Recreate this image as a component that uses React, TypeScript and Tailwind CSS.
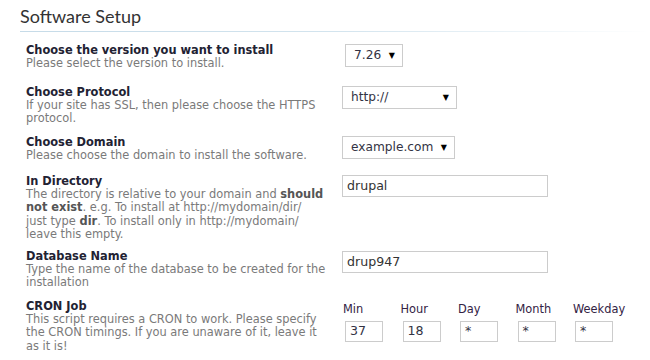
import { ReactNode } from "react";

const vd = { fontFamily: '"DejaVu Sans", Verdana, sans-serif' };

function Select({ value, width, className = "" }: { value: string; width: string; className?: string }) {
  return (
    <div
      className={`flex h-[23px] items-center justify-between border border-[#cccccc] bg-white pl-[8px] pr-[7px] text-[12.2px] text-[#333344] ${width} ${className}`}
      style={vd}
    >
      <span>{value}</span>
      <span className="text-[8px] leading-none text-black">▼</span>
    </div>
  );
}

function TextBox({ value, className = "" }: { value: string; className?: string }) {
  return (
    <div
      className={`flex h-[22px] items-center border border-[#cccccc] bg-white pl-[4px] text-[12.6px] text-[#333333] ${className}`}
      style={vd}
    >
      {value}
    </div>
  );
}

function Row({ title, desc, height, children }: { title: string; desc: ReactNode; height: string; children?: ReactNode }) {
  return (
    <div className={`flex ${height}`}>
      <div className="w-[316px] shrink-0 pl-[26px]" style={vd}>
        <div className="text-[11.4px] font-bold leading-[14px] text-[#222233]">{title}</div>
        <div className="whitespace-nowrap text-[11.4px] leading-[13.4px] text-[#7a7a7a]">{desc}</div>
      </div>
      <div className="flex-1">{children}</div>
    </div>
  );
}

export default function App() {
  const cron = [
    { label: "Min", value: "37" },
    { label: "Hour", value: "18" },
    { label: "Day", value: "*" },
    { label: "Month", value: "*" },
    { label: "Weekday", value: "*" },
  ];

  return (
    <div className="h-[360px] w-[650px] overflow-hidden bg-white">
      <div className="pl-[20px] pt-[3px]">
        <h1 className="text-[18px] leading-[26px] text-[#333333]" style={{ fontFamily: 'Lato, "Open Sans", sans-serif' }}>
          Software Setup
        </h1>
        <div className="mt-[2px] h-[1px] bg-gradient-to-r from-[#c6dbe8] via-[#d3e4ee] to-white" />
      </div>

      <div className="mt-[11px]">
        <Row title="Choose the version you want to install" desc="Please select the version to install." height="h-[42px]">
          <Select value="7.26" width="w-[58px]" className="ml-[29px] mt-[1px]" />
        </Row>

        <Row
          title="Choose Protocol"
          desc={<>If your site has SSL, then please choose the HTTPS<br />protocol.</>}
          height="h-[50px]"
        >
          <Select value="http://" width="w-[115px]" className="ml-[26px] mt-[1px]" />
        </Row>

        <Row title="Choose Domain" desc="Please choose the domain to install the software." height="h-[39px]">
          <Select value="example.com" width="w-[113px]" className="ml-[26px] mt-[1px]" />
        </Row>

        <Row
          title="In Directory"
          desc={
            <>
              The directory is relative to your domain and <b className="text-[#555555]">should</b>
              <br />
              <b className="text-[#555555]">not exist</b>. e.g. To install at http://mydomain/dir/
              <br />
              just type <b className="text-[#555555]">dir</b>. To install only in http://mydomain/
              <br />
              leave this empty.
            </>
          }
          height="h-[75px]"
        >
          <TextBox value="drupal" className="ml-[26px] mt-[1px] w-[206px]" />
        </Row>

        <Row
          title="Database Name"
          desc={<>Type the name of the database to be created for the<br />installation</>}
          height="h-[50px]"
        >
          <TextBox value="drup947" className="ml-[26px] mt-[2px] w-[206px]" />
        </Row>

        <Row
          title="CRON Job"
          desc={
            <>
              This script requires a CRON to work. Please specify
              <br />
              the CRON timings. If you are unaware of it, leave it
              <br />
              as it is!
            </>
          }
          height="h-[61px]"
        >
          <div className="ml-[27px] mt-[3px] grid grid-cols-[57.5px_57.5px_57.5px_57.5px_57.5px]" style={vd}>
            {cron.map((c) => (
              <div key={c.label} className="flex flex-col">
                <span className="text-[11.4px] leading-[14px] text-[#332244]">{c.label}</span>
                <div className="ml-[2px] mt-[5px] flex h-[21px] w-[38px] items-center border border-[#cccccc] pl-[4px] text-[12.6px] text-[#333344]">
                  {c.value}
                </div>
              </div>
            ))}
          </div>
        </Row>
      </div>
    </div>
  );
}
